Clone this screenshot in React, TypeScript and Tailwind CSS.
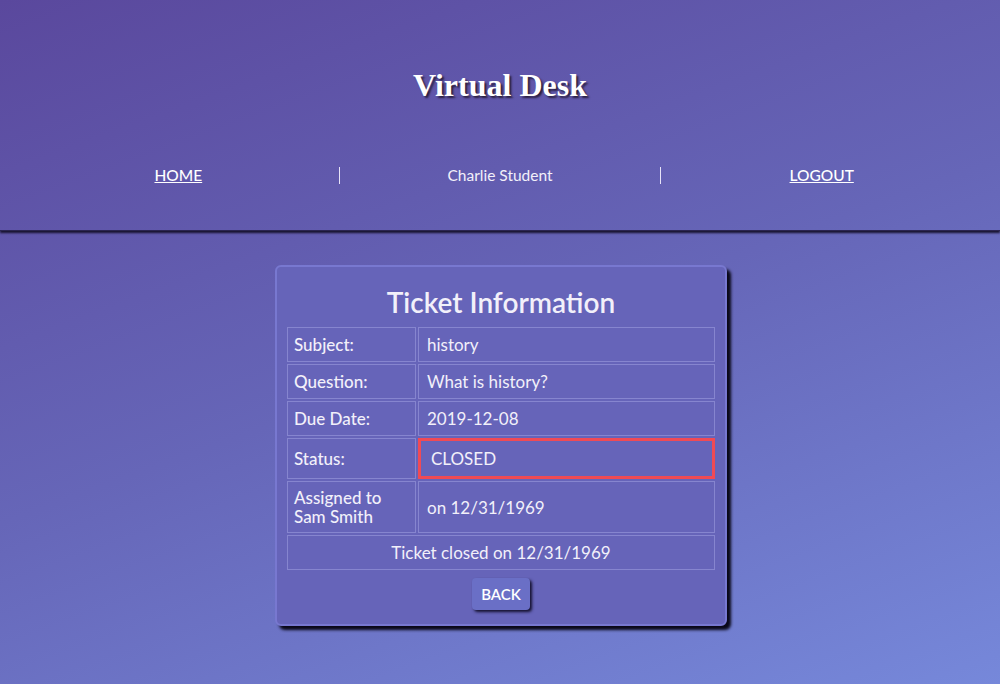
import React from "react";

export default function App() {
  const font = { fontFamily: '"Lato", "Noto Sans", sans-serif' };
  const rows: [React.ReactNode, string, boolean][] = [
    ["Subject:", "history", false],
    ["Question:", "What is history?", false],
    ["Due Date:", "2019-12-08", false],
    ["Status:", "CLOSED", true],
    [
      <>
        Assigned to
        <br />
        Sam Smith
      </>,
      "on 12/31/1969",
      false,
    ],
  ];
  return (
    <div
      className="w-[1000px] h-[684px] overflow-hidden bg-[linear-gradient(160deg,#5a489d_0%,#6666b8_50%,#7688da_100%)] text-[#f2f0fa]"
      style={font}
    >
      <header className="h-[231px] flex flex-col items-center shadow-[0_2px_2px_rgba(20,15,40,0.95)] border-b border-[#2a2450]">
        <h1
          className="mt-[66px] text-[32px] font-bold leading-[38px] text-white [text-shadow:2px_2px_2px_#2a1f3f]"
          style={{ fontFamily: '"Liberation Serif", serif' }}
        >
          Virtual Desk
        </h1>
        <nav className="mt-[63px] w-full px-[18px] flex text-[15.5px] leading-[17px]">
          <div className="flex-1 text-center">
            <a className="underline font-medium text-white" href="#">HOME</a>
          </div>
          <div className="flex-1 text-center border-l border-[#e8e4f8]">
            Charlie Student
          </div>
          <div className="flex-1 text-center border-l border-[#e8e4f8]">
            <a className="underline font-medium text-white" href="#">LOGOUT</a>
          </div>
        </nav>
      </header>
      <main className="flex justify-center pt-[34px] pl-[2px]">
        <div className="w-[452px] rounded-[6px] border-2 border-[#7878d0] bg-[#6664b9] shadow-[4px_4px_3px_#0a0818] px-[8px] pb-[14px]">
          <h2 className="text-center text-[28px] font-semibold leading-[34px] mt-[18px] mb-[6px]">
            Ticket Information
          </h2>
          <table className="w-full border-separate border-spacing-[2px] text-[17px]">
            <tbody>
              {rows.map(([label, value, red], i) => (
                <tr key={i}>
                  <td className="w-[129px] border border-[#8685cf] px-[6px] py-[6px] leading-[19px] font-medium">
                    {label}
                  </td>
                  <td
                    className={
                      red
                        ? "border-[3px] border-[#f04a55] px-[10px] py-[8px] leading-[19px]"
                        : "border border-[#8685cf] px-[8px] py-[7px] leading-[19px]"
                    }
                  >
                    {value}
                  </td>
                </tr>
              ))}
              <tr>
                <td colSpan={2} className="border border-[#8685cf] text-center py-[7px] leading-[19px]">
                  Ticket closed on 12/31/1969
                </td>
              </tr>
            </tbody>
          </table>
          <div className="flex justify-center mt-[6px]">
            <button className="px-[9px] h-[32px] rounded-[4px] bg-[#6a6fc6] text-white text-[15px] font-semibold shadow-[2px_2px_3px_#14102e]">
              BACK
            </button>
          </div>
        </div>
      </main>
    </div>
  );
}
